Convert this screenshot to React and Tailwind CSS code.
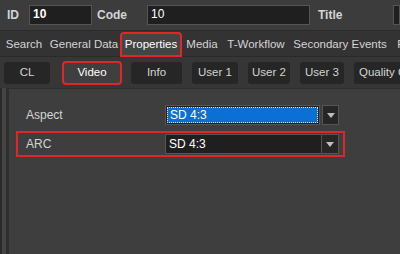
import React from 'react';

const tabs = [
  { label: 'Search', w: 'w-[46px]' },
  { label: 'General Data', w: 'w-[72px]' },
  { label: 'Properties', w: 'w-[60px]' },
  { label: 'Media', w: 'w-[40px]' },
  { label: 'T-Workflow', w: 'w-[66px]' },
  { label: 'Secondary Events', w: 'w-[100px]' },
  { label: 'P', w: 'w-[20px]' },
];

const subTabs = [
  { label: 'CL', w: 'w-[46px] justify-center' },
  { label: 'Video', w: 'w-[58px] ml-[3px] justify-center' },
  { label: 'Info', w: 'w-[51px] justify-center' },
  { label: 'User 1', w: 'w-[46px] justify-center' },
  { label: 'User 2', w: 'w-[42px] justify-center' },
  { label: 'User 3', w: 'w-[44px] justify-center' },
  { label: 'Quality C', w: 'w-[60px] justify-start pl-[5px]' },
];

function Arrow() {
  return (
    <div className="ml-[2px] flex h-full w-[17px] items-center justify-center border border-[#555] bg-[#262626]">
      <svg width="8" height="5" viewBox="0 0 8 5">
        <path d="M0 0h8L4 5z" fill="#bdbdbd" />
      </svg>
    </div>
  );
}

export default function App() {
  return (
    <div className="relative h-[254px] w-[400px] overflow-hidden bg-[#3c3c3c] text-[12px] text-[#d4d4d4] [font-family:'Liberation_Sans',Arial,sans-serif]">
      <div className="flex h-[31px] items-center border-b border-[#2a2a2a] pl-[7px]">
        <span className="w-[22px] font-bold">ID</span>
        <div className="h-[20px] w-[63px] border border-[#555] bg-[#1f1f1f] pl-[3px] font-bold leading-[17px] text-white">10</div>
        <span className="ml-[5px] w-[50px] font-bold">Code</span>
        <div className="h-[20px] w-[163px] border border-[#555] bg-[#1f1f1f] pl-[3px] leading-[17px] text-white">10</div>
        <span className="ml-[8px] w-[75px] font-bold">Title</span>
        <div className="h-[20px] flex-1 border border-[#555] bg-[#1f1f1f]" />
      </div>

      <div className="flex h-[26px] items-end gap-[1px] border-b border-[#2a2a2a] bg-[#343434] pl-[1px] text-[11.5px]">
        {tabs.map((t) => (
          <div
            key={t.label}
            className={
              'flex h-[23px] shrink-0 items-center justify-center whitespace-nowrap rounded-t-[3px] ' +
              t.w +
              (t.label === 'Properties'
                ? ' bg-[#444] text-white outline-2 -outline-offset-1 outline-[#e0262b]'
                : ' bg-[#333]')
            }
          >
            {t.label}
          </div>
        ))}
      </div>

      <div className="flex h-[31px] items-center gap-[10px] bg-[#363636] pl-[4px] text-[11.5px]">
        {subTabs.map((t) => (
          <div
            key={t.label}
            className={
              'flex h-[22px] shrink-0 items-center whitespace-nowrap rounded-[3px] ' +
              t.w +
              (t.label === 'Video'
                ? ' bg-[#3f3f3f] text-white outline-2 -outline-offset-1 outline-[#e0262b]'
                : ' bg-[#262626]')
            }
          >
            {t.label}
          </div>
        ))}
      </div>

      <div className="flex h-[166px]">
        <div className="w-[2px] bg-[#2a2a2a]" />
        <div className="w-[4px] bg-[#444]" />
        <div className="w-[3px] bg-[#2e2e2e]" />
        <div className="flex-1 border-t border-[#2e2e2e] bg-[#3e3e3e] pt-[16px]">
          <div className="flex h-[20px] items-center pl-[17px]">
            <span className="w-[139px]">Aspect</span>
            <div className="flex h-[20px] w-[174px] items-stretch">
              <div className="flex flex-1 border border-[#555] bg-[#1f1f1f] p-[1px]">
                <div className="flex-1 border border-dotted border-[#ddd] bg-[#0a70d6] pl-[2px] leading-[14px] text-white">SD 4:3</div>
              </div>
              <Arrow />
            </div>
          </div>
          <div className="ml-[7px] mt-[6px] flex h-[26px] w-[329px] items-center border-2 border-[#e0262b] pl-[8px]">
            <span className="w-[139px]">ARC</span>
            <div className="flex h-[20px] w-[174px] items-stretch border border-[#555] bg-[#1f1f1f]">
              <div className="flex-1 pl-[3px] leading-[18px] text-white">SD 4:3</div>
              <div className="flex w-[17px] items-center justify-center border-l border-[#555] bg-[#262626]">
                <svg width="8" height="5" viewBox="0 0 8 5">
                  <path d="M0 0h8L4 5z" fill="#bdbdbd" />
                </svg>
              </div>
            </div>
          </div>
        </div>
      </div>
    </div>
  );
}
